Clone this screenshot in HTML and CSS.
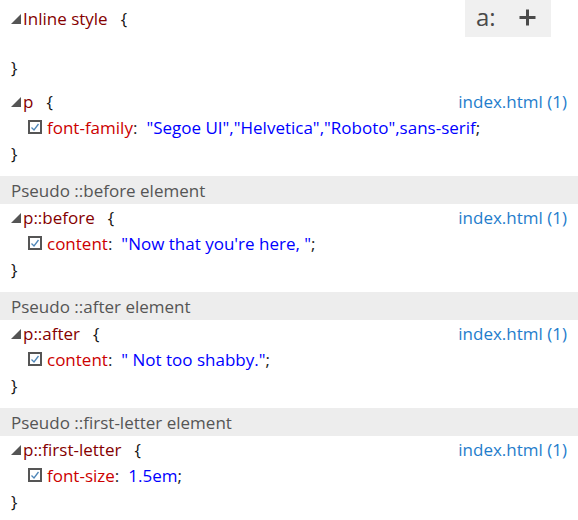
FILE: index.html
```html
<!DOCTYPE html>
<html lang="en">
<head>
    <meta charset="UTF-8">
    <title>Styles</title>
    <link rel="stylesheet" href="styles.css">
</head>
<body>
<div class="pane">
    <div class="toolbar">
        <span class="tb-a">a:</span>
        <svg class="tb-plus" width="19" height="19" viewBox="0 0 19 19"><path d="M9.5 1.5V17.5M1.5 9.5H17.5"/></svg>
    </div>

    <div class="rule rule-inline">
        <div class="row">
            <svg class="arrow" width="10" height="10" viewBox="0 0 10 10"><polygon points="10,0 10,10 0,10"/></svg>
            <span class="selector">Inline style</span><span class="brace">{</span>
        </div>
        <div class="empty"></div>
        <div class="row"><span class="close">}</span></div>
    </div>

    <div class="rule">
        <div class="row">
            <svg class="arrow" width="10" height="10" viewBox="0 0 10 10"><polygon points="10,0 10,10 0,10"/></svg>
            <span class="selector">p</span><span class="brace">{</span>
            <span class="source">index.html (1)</span>
        </div>
        <div class="row decl">
            <svg class="check" width="14" height="14" viewBox="0 0 14 14"><rect x="1" y="1" width="12" height="12"/><polyline points="3.5,7.5 6,10 10.5,4"/></svg>
            <span class="prop">font-family</span><span class="colon">:</span>
            <span class="val">"Segoe UI","Helvetica","Roboto",sans-serif</span><span class="semi">;</span>
        </div>
        <div class="row"><span class="close">}</span></div>
    </div>

    <div class="band">Pseudo ::before element</div>
    <div class="rule">
        <div class="row">
            <svg class="arrow" width="10" height="10" viewBox="0 0 10 10"><polygon points="10,0 10,10 0,10"/></svg>
            <span class="selector">p::before</span><span class="brace">{</span>
            <span class="source">index.html (1)</span>
        </div>
        <div class="row decl">
            <svg class="check" width="14" height="14" viewBox="0 0 14 14"><rect x="1" y="1" width="12" height="12"/><polyline points="3.5,7.5 6,10 10.5,4"/></svg>
            <span class="prop">content</span><span class="colon">:</span>
            <span class="val">"Now that you're here, "</span><span class="semi">;</span>
        </div>
        <div class="row"><span class="close">}</span></div>
    </div>

    <div class="band">Pseudo ::after element</div>
    <div class="rule">
        <div class="row">
            <svg class="arrow" width="10" height="10" viewBox="0 0 10 10"><polygon points="10,0 10,10 0,10"/></svg>
            <span class="selector">p::after</span><span class="brace">{</span>
            <span class="source">index.html (1)</span>
        </div>
        <div class="row decl">
            <svg class="check" width="14" height="14" viewBox="0 0 14 14"><rect x="1" y="1" width="12" height="12"/><polyline points="3.5,7.5 6,10 10.5,4"/></svg>
            <span class="prop">content</span><span class="colon">:</span>
            <span class="val">" Not too shabby."</span><span class="semi">;</span>
        </div>
        <div class="row"><span class="close">}</span></div>
    </div>

    <div class="band">Pseudo ::first-letter element</div>
    <div class="rule">
        <div class="row">
            <svg class="arrow" width="10" height="10" viewBox="0 0 10 10"><polygon points="10,0 10,10 0,10"/></svg>
            <span class="selector">p::first-letter</span><span class="brace">{</span>
            <span class="source">index.html (1)</span>
        </div>
        <div class="row decl">
            <svg class="check" width="14" height="14" viewBox="0 0 14 14"><rect x="1" y="1" width="12" height="12"/><polyline points="3.5,7.5 6,10 10.5,4"/></svg>
            <span class="prop">font-size</span><span class="colon">:</span>
            <span class="val">1.5em</span><span class="semi">;</span>
        </div>
        <div class="row"><span class="close">}</span></div>
    </div>
</div>
</body>
</html>
```

FILE: styles.css
```css
body {
    margin: 0;
    background-color: #fff;
    font-family: "Open Sans", "Noto Sans", sans-serif;
    font-size: 17px;
    color: #1e1e1e;
}

.pane {
    position: relative;
    width: 578px;
}

/* кнопки в правом верхнем углу */
.toolbar {
    position: absolute;
    top: 0;
    left: 465px;
    width: 86px;
    height: 37px;
    box-sizing: border-box;
    padding-left: 11px;
    background-color: #f0f0f0;
    display: flex;
    align-items: center;
    gap: 22px;
    color: #4a4a4a;
}
.tb-a {
    font-size: 24px;
    line-height: 1;
    margin-top: -3px;
}
.tb-plus {
    stroke: #4a4a4a;
    stroke-width: 3;
    margin-top: -2px;
}

.rule {
    padding: 0 11px 10px 11px;
}
.rule-inline {
    padding-top: 5px;
    padding-bottom: 8px;
}
.empty {
    height: 23px;
}

.row {
    height: 26px;
    display: flex;
    align-items: center;
    white-space: nowrap;
}
.arrow {
    flex: none;
    fill: #555;
    margin-right: 2px;
    margin-top: 1px;
}
.selector {
    color: #850000;
}
.brace {
    margin-left: 13px;
    color: #111;
}
.close {
    color: #111;
}
.source {
    margin-left: auto;
    color: #1f7dcc;
}

.decl {
    padding-left: 17px;
}
.check {
    flex: none;
}
.check rect {
    fill: #fff;
    stroke: #555;
    stroke-width: 2;
}
.check polyline {
    fill: none;
    stroke: #4e86b8;
    stroke-width: 1.3;
}
.prop {
    color: #cc0000;
    margin-left: 5px;
}
.val {
    color: #0000ff;
    margin-left: 9px;
}

.band {
    height: 28px;
    padding-left: 11px;
    display: flex;
    align-items: center;
    background-color: #ededed;
    color: #555;
}
```
